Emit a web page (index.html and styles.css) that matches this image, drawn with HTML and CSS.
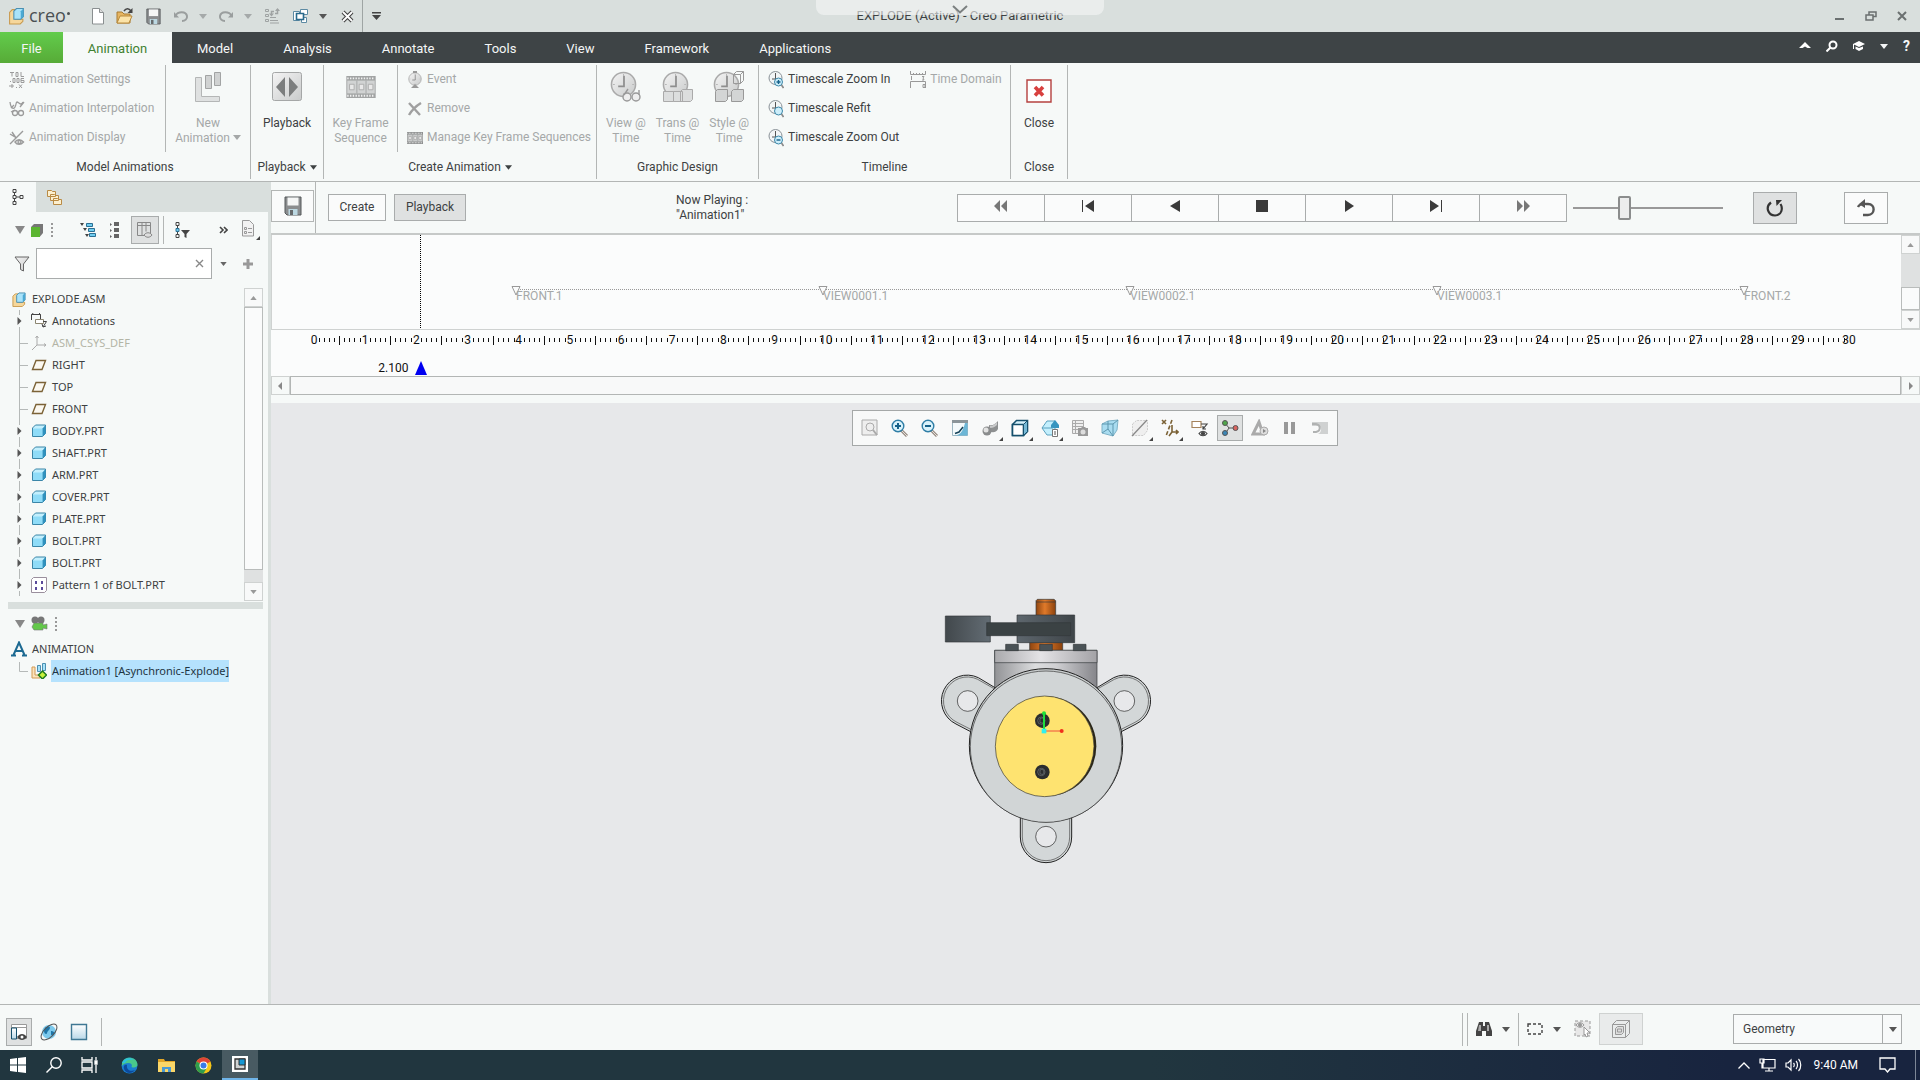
FILE: index.html
```html
<!DOCTYPE html>
<html lang="en">
<head>
<meta charset="utf-8">
<title>EXPLODE (Active) - Creo Parametric</title>
<link rel="stylesheet" href="styles.css">
</head>
<body>
<svg class="defs" aria-hidden="true">
  <defs>
    <linearGradient id="g-grey" x1="0" y1="0" x2="1" y2="1"><stop offset="0" stop-color="#f4f4f4"/><stop offset="1" stop-color="#c9cbcb"/></linearGradient>
    <linearGradient id="g-fade" x1="0" y1="0" x2="0" y2="1"><stop offset="0" stop-color="#ffffff"/><stop offset="1" stop-color="#b9d8e8"/></linearGradient>
  </defs>
  <symbol id="caret" viewBox="0 0 8 5"><path d="M0 0h8L4 5z" fill="currentColor"/></symbol>
  <symbol id="corner" viewBox="0 0 4 4"><path d="M4 0v4H0z" fill="#444"/></symbol>
  <symbol id="asm" viewBox="0 0 16 16"><path d="M1.5 4.500 4 2h3v9h7v2l-2.500 2.500h-10z" fill="#f6d79b" stroke="#c89a4e"/><path d="M5.500 3.500 8 1h6.500v7.500L12 11H5.500z" fill="#a9e3fa" stroke="#4c8fb0"/><path d="M12 11V3.500L14.500 1v7.500z" fill="#4ba9d4"/></symbol>
  <symbol id="part" viewBox="0 0 16 14"><path d="M1.500 4 4.500 1h10v8.500l-3 3h-10z" fill="#c3effd" stroke="#3b86a8"/><path d="M2 4.500h9.500V12H2z" fill="#8fdcf8"/><path d="M11.500 12.500V4.500l3-3.500v8.500z" fill="#2f92bf"/></symbol>
  <symbol id="plane" viewBox="0 0 16 12"><path d="M5 1.500h9.500L11 10.500H1.500z" fill="#fbf8f0" stroke="#7b6236" stroke-width="1.400"/></symbol>
  <symbol id="floppy" viewBox="0 0 18 20"><path d="M1 1h16v18H3l-2-2z" fill="#8b8d8f" stroke="#55585a"/><path d="M3.500 1.500h11v8h-11z" fill="#f5f6f6"/><path d="M4.500 13h9v6h-9z" fill="#bcd8e2"/><path d="M6 14h3v5H6z" fill="#666a6c"/></symbol>
  <symbol id="expander" viewBox="0 0 12 22"><path d="M3.500 0v5M3.500 17v5" stroke="#b5b9b8"/><path d="M1.500 7v8l4-4z" fill="#555"/></symbol>
  <symbol id="branch" viewBox="0 0 12 22"><path d="M3.500 0v22M3.500 11.500H12" stroke="#b5b9b8" fill="none"/></symbol>
  <symbol id="clock" viewBox="0 0 28 28"><circle cx="14" cy="14" r="12.500" fill="url(#g-grey)" stroke="#aaa" stroke-width="1.600"/><path d="M14 3v2M14 23v2M3 14h2M23 14h2" stroke="#b5b5b5"/><path d="M14.500 5v11h-6" stroke="#8e8e8e" stroke-width="1.800" fill="none"/></symbol>
  <symbol id="scale" viewBox="0 0 16 18"><circle cx="7.500" cy="7" r="6.500" fill="#f2f5f6" stroke="#8a9298"/><path d="M7.500 2v6H4" stroke="#555" fill="none"/><circle cx="10.500" cy="11" r="4" fill="#cdeefa" stroke="#3a86a8"/><path d="m13.500 14 2 3" stroke="#888" stroke-width="1.600"/></symbol>
  <symbol id="film" viewBox="0 0 32 24"><path d="M0 0h32v24H0z" fill="#8e9090"/><path d="M1 2.500h30M1 21.500h30" stroke="#f0f0f0" stroke-width="2" stroke-dasharray="1.500 1.500"/><path d="M1 5h30v14H1z" fill="#c8caca"/><path d="M11.500 5v14M21.500 5v14" stroke="#8e9090"/><path d="M3.500 9h5v6h-5zM14 9h5v6h-5zM24 9h5v6h-5z" fill="#e6e6e6" stroke="#999"/></symbol>
  <symbol id="magnify" viewBox="0 0 18 18"><path d="m10 11 6 6" stroke="#9a8f86" stroke-width="3"/><path d="m10 11 6 6" stroke="#e5e0da"/><circle cx="7" cy="7" r="5.800" fill="#d9f2fb" stroke="#2f7ea6" stroke-width="1.400"/></symbol>
</svg>

<header class="titlebar">
  <div class="brand"><svg width="17" height="18"><use href="#asm"/></svg><span>creo</span><i></i></div>
  <nav class="quick" aria-label="Quick access">
    <button class="q-new" aria-label="New"><svg width="14" height="17"><path d="M1.500.5h7l4 4v11.500h-11z" fill="#fff" stroke="#8a8f90"/><path d="M8.500.5v4h4" fill="#ddd" stroke="#8a8f90"/></svg></button>
    <button class="q-open" aria-label="Open"><svg width="18" height="18"><path d="M1 5h5l2 2h6v9H1z" fill="#e6b561" stroke="#a87a30"/><path d="M4 9h12l-3 7H1z" fill="#fbe3a8" stroke="#b98a3c"/><path d="M8 4c2-3 5-3 7 0" stroke="#444" stroke-width="1.500" fill="none"/><path d="M16.500 1v5h-5z" fill="#444"/></svg></button>
    <button class="q-save" aria-label="Save"><svg width="15" height="17"><use href="#floppy"/></svg></button>
    <button class="q-undo" aria-label="Undo"><svg width="16" height="13" fill="none" stroke="#9a9e9e" stroke-width="2"><path d="M2 6c3-5 11-5 12 0 .5 3-2 5-5 5"/><path d="M1 2v5.500h5z" fill="#9a9e9e" stroke="none"/></svg></button>
    <button class="q-caret dim" aria-label="Undo list"><svg width="8" height="5"><use href="#caret"/></svg></button>
    <button class="q-redo" aria-label="Redo"><svg width="16" height="13" fill="none" stroke="#9a9e9e" stroke-width="2"><path d="M14 6c-3-5-11-5-12 0-.5 3 2 5 5 5"/><path d="M15 2v5.500h-5z" fill="#9a9e9e" stroke="none"/></svg></button>
    <button class="q-caret dim" aria-label="Redo list"><svg width="8" height="5"><use href="#caret"/></svg></button>
    <button class="q-regen" aria-label="Regenerate"><svg width="16" height="16" fill="none" stroke="#9fa3a3"><path d="M1.500 1.500h3v2h-3zM1.500 6.500h3v2h-3zM1.500 11.500h3v2h-3zM6 12.500h8M6 15h9M6 9.500h6"/><path d="M7.500 6V3.500H10M13.500 1v4.500H11" stroke-width="1.500"/><path d="M5 5.500h5l-2.500 3zM11 3h5l-2.500-3z" fill="#9fa3a3" stroke="none"/></svg></button>
    <button class="q-win" aria-label="Windows"><svg width="17" height="16" fill="#fff" stroke="#5d8aa3"><path d="M8.500 1.500h7v5h-7zM1.500 3.500h6v9h-6zM9.500 9.500h5v5h-5z"/><path d="M4.500 5.500h7v6h-7z" stroke="#2a6a8c" stroke-width="1.600"/></svg></button>
    <button class="q-caret" aria-label="Window list"><svg width="8" height="5"><use href="#caret"/></svg></button>
    <button class="q-close" aria-label="Close window"><svg width="13" height="13"><path d="m2 2 9 9M11 2l-9 9" stroke="#444" stroke-width="4"/><path d="m2 2 9 9M11 2l-9 9" stroke="#fff" stroke-width="1.800"/></svg></button>
    <button class="q-more" aria-label="Customize"><svg width="9" height="9" fill="#444"><path d="M0 0h9v1.500H0zM0 3h9L4.500 8z"/></svg></button>
  </nav>
  <h1>EXPLODE (Active) - Creo Parametric</h1>
  <div class="drawer"><svg width="16" height="9" fill="none" stroke="#7b8080" stroke-width="2"><path d="m1 1 7 6.500L15 1"/></svg></div>
  <div class="wincontrols">
    <button aria-label="Minimize"><svg width="12" height="12"><path d="M1 8h9v2H1z" fill="#6b7070"/></svg></button>
    <button aria-label="Restore"><svg width="12" height="12" fill="none" stroke="#6b7070" stroke-width="1.500"><path d="M1 5h7v5H1zM4 4.500V2h7v4.500H8"/></svg></button>
    <button aria-label="Close"><svg width="12" height="12" stroke="#6b7070" stroke-width="2"><path d="m2 2 8 8M10 2l-8 8"/></svg></button>
  </div>
</header>

<nav class="tabs">
  <button class="file">File</button><button class="active">Animation</button><button>Model</button><button>Analysis</button><button>Annotate</button><button>Tools</button><button>View</button><button>Framework</button><button>Applications</button>
  <div class="tabtools">
    <button aria-label="Collapse ribbon"><svg width="12" height="10" fill="#fff"><path d="M0 7 6 1l6 6H8.500L6 5.500 3.500 7z"/></svg></button>
    <button aria-label="Search"><svg width="12" height="12" fill="none" stroke="#fff" stroke-width="2"><circle cx="7" cy="5" r="3.500"/><path d="m4.500 7.500-4 4"/></svg></button>
    <button aria-label="Learning"><svg width="12" height="12" fill="#fff"><path d="m6 1 6 3-6 3-6-3zM2.500 6.500 6 8l4-1.500V9L6 11 2.500 9zM0 4h1v5H0z"/></svg></button>
    <button aria-label="Learning list"><svg width="8" height="5"><use href="#caret"/></svg></button>
    <button aria-label="Help" class="help">?</button>
  </div>
</nav>

<section class="ribbon">
  <div class="group g-model">
    <div class="body">
      <div class="rows sep">
        <button disabled><svg width="16" height="18" fill="none" stroke="#9b9b9b"><path d="M1 1.500h4M3 1.500v4M7 1.500h2v4H7zM12 1v4.500h3M1.500 10v1M4 7.500h2v4H4zM8 7.500h2v4H8zM15 7.500h-3v4h3v-2h-3M0 15h5M3 13v4M7 16.500h1M10 13.500l3 3.500M13 13.500 10 17"/></svg>Animation Settings</button>
        <button disabled><svg width="16" height="17" fill="none" stroke="#9b9b9b" stroke-width="1.300"><path d="M1 2c1 8 5 8 6 2s4 4 7-2M11 7l4-5M2 8l3-3M2 12l4-2"/><circle cx="6" cy="13" r="2.500"/><circle cx="12" cy="13" r="2.500"/></svg>Animation Interpolation</button>
        <button disabled><svg width="16" height="16" fill="none" stroke="#9b9b9b" stroke-width="1.400"><path d="M1 14 14 1M3 2l4 6M1 4l5 3"/><path d="M6 12c2-3 6-3 8.500 0-2.500 3-6.500 3-8.500 0z"/><circle cx="10.500" cy="12" r="1.500"/></svg>Animation Display</button>
      </div>
      <button class="big" disabled><svg width="28" height="32" fill="#dfe1e1" stroke="#b4b6b6"><path d="M1.500 6.500h6v19h18v5h-24z"/><path d="M11.500 4.500h6v13h-6zM20.500 1.500h6v13h-6z" fill="#d0d2d2" stroke="#a2a4a4"/></svg><span>New<br>Animation <svg width="8" height="5"><use href="#caret"/></svg></span></button>
    </div>
    <div class="caption">Model Animations</div>
  </div>
  <div class="group g-play">
    <div class="body">
      <button class="big"><svg width="30" height="32"><rect x=".5" y="1.500" width="29" height="28" rx="2" fill="url(#g-grey)" stroke="#a5a7a7"/><path d="M13 6v20L4 16zM17 6v20l9-10z" fill="#7c7e7e"/></svg><span>Playback</span></button>
    </div>
    <div class="caption">Playback <svg width="7" height="5"><use href="#caret"/></svg></div>
  </div>
  <div class="group g-create">
    <div class="body">
      <button class="big sep" disabled><svg width="32" height="32"><g transform="translate(0 5)" opacity=".8"><use href="#film" width="32" height="22"/></g></svg><span>Key Frame<br>Sequence</span></button>
      <div class="rows">
        <button disabled><svg width="16" height="18"><use href="#clock" x="1" y="1" width="14" height="14"/><path d="M4 17h8l-4-4zM6 0h4v2H6z" fill="#999"/></svg>Event</button>
        <button disabled><svg width="16" height="14" stroke="#a0a0a0" stroke-width="2.400" fill="none"><path d="m2 1 11 12M14 1C9 4 5 8 2 13"/></svg>Remove</button>
        <button disabled><svg width="16" height="12"><use href="#film" width="16" height="12"/></svg>Manage Key Frame Sequences</button>
      </div>
    </div>
    <div class="caption">Create Animation <svg width="7" height="5"><use href="#caret"/></svg></div>
  </div>
  <div class="group g-design">
    <div class="body">
      <button class="big" disabled><svg width="32" height="32"><use href="#clock" width="27" height="27"/><g fill="#eee" stroke="#999" stroke-width="1.400"><circle cx="17" cy="26" r="4"/><circle cx="26" cy="26" r="4"/><path d="M14 24l4-6M29 24V19" fill="none"/></g></svg><span>View @<br>Time</span></button>
      <button class="big" disabled><svg width="32" height="32"><use href="#clock" width="27" height="27"/><g fill="#dcdede" stroke="#aaa"><path d="M1.500 20.500h10v10h-10zM11.500 20.500h9v10h-9zM18.500 20.500l2-2h10v10l-2 2h-10z"/></g></svg><span>Trans @<br>Time</span></button>
      <button class="big" disabled><svg width="32" height="32"><use href="#clock" width="27" height="27"/><g fill="#d3d5d5" stroke="#999"><path d="M20.500 3.500l3-3h7v9l-3 3h-7zM20.500 3.500h7v9M27.500 3.500l3-3" fill="none"/><path d="M2.500 20.500l2-2h10v10l-2 2h-10zM18.500 20.500l2-2h10v10l-2 2h-10z"/></g></svg><span>Style @<br>Time</span></button>
    </div>
    <div class="caption">Graphic Design</div>
  </div>
  <div class="group g-timeline">
    <div class="body">
      <div class="rows">
        <button><svg width="16" height="18"><use href="#scale"/><path d="M8.500 11h4M10.500 9v4" stroke="#15618a" stroke-width="1.400"/></svg>Timescale Zoom In</button>
        <button><svg width="16" height="18"><use href="#scale"/></svg>Timescale Refit</button>
        <button><svg width="16" height="18"><use href="#scale"/><path d="M8.500 11h4" stroke="#15618a" stroke-width="1.400"/></svg>Timescale Zoom Out</button>
      </div>
      <div class="rows">
        <button disabled><svg width="16" height="18" fill="none" stroke="#999"><path d="M.5 0v3.500h15V0M3.500 2v1M6.500 2v1M9.500 2v1M12.500 2v1M.5 17v-6.500h15V17M1.500 5v4M12 5.500h2l-1 1.500 1 2h-2M13 13.500h2v3h-2z"/></svg>Time Domain</button>
      </div>
    </div>
    <div class="caption">Timeline</div>
  </div>
  <div class="group g-close">
    <div class="body">
      <button class="big"><svg width="26" height="32"><path d="M1 9h24v22H1z" fill="#fff" stroke="#b5413f" stroke-width="1.400"/><path d="m9 16 8 8.500M17 16l-8 8.500" stroke="#d8403f" stroke-width="3.600"/></svg><span>Close</span></button>
    </div>
    <div class="caption">Close</div>
  </div>
</section>

<main class="work">
  <aside class="side">
    <div class="sidetabs">
      <button class="on" aria-label="Model tree"><svg width="12" height="16" fill="none" stroke="#444"><path d="M1 .5h3v3H1zM1 6.500h3v3H1zM1 12.500h3v3H1zM8 6.500h3v3H8zM2.500 4v2M2.500 10v2M4 8h4"/></svg></button>
      <button aria-label="Folders"><svg width="17" height="17" fill="#fdf0cf" stroke="#b98b45"><path d="M1.500 1.500h4l1 1h3v5h-8zM4.500 5.500h4l1 1h3v5h-8zM7.500 9.500h4l1 1h3v5h-8z"/></svg></button>
    </div>
    <div class="treebar">
      <button aria-label="Collapse"><svg width="10" height="8" fill="#888"><path d="M0 0h10L5 8z"/></svg></button>
      <button class="t-cube" aria-label="Model"><svg width="14" height="15"><path d="m1 4 3-3h9v9l-3 3.500H1z" fill="#777"/><path d="M1 4h9v10H1z" fill="#5bb531"/></svg></button>
      <span class="grip"></span>
      <button class="t-a" aria-label="Tree columns"><svg width="17" height="16" fill="#6fcdf0" stroke="#2b6f93"><path d="M6.500 1.500h6v3h-6zM8.500 6.500h6v3h-6zM9.500 11.500h6v3h-6z"/><path d="M0 1h4L2 4zM3 6h4L5 9zM5 12h4l-2 3z" fill="#444" stroke="none"/></svg></button>
      <button class="t-b" aria-label="Tree list"><svg width="10" height="16" fill="#666"><path d="M4 0h5v4H4zM4 6h5v4H4zM4 12h5v4H4zM0 1l2 1.500L0 4zM0 7l2 1.500L0 10zM0 13l2 1.500L0 16z"/></svg></button>
      <button class="t-c pressed" aria-label="Show columns"><svg width="16" height="17" fill="none" stroke="#888"><path d="M.5.5h13v13H.5zM.5 3.500h13M5 .5v13M9 .5v9"/><path d="M7 13c2-3 6-3 8 0-2 3-6 3-8 0z" fill="#ddd"/></svg></button>
      <span class="rule"></span>
      <button class="t-d" aria-label="Tree filters"><svg width="16" height="17" fill="none" stroke="#444"><path d="M1 .5h3v3H1zM1 12.500h3v3H1zM2.500 4v8"/><path d="M1 6.500h3v3H1z" fill="#6fcdf0" stroke="#2b6f93"/><path d="M6 8h9l-3.500 4v4l-2-1v-3z" fill="#444" stroke="none"/></svg></button>
      <button class="t-e" aria-label="More"><svg width="9" height="8" fill="none" stroke="#444" stroke-width="1.600"><path d="m1 1 3 3-3 3M5 1l3 3-3 3"/></svg></button>
      <button class="t-f" aria-label="Settings"><svg width="19" height="20"><path d="M1.500.5h7l4 4v11.500h-11z" fill="#f2f2f2" stroke="#999"/><path d="M3.500 7.500h2v2h-2zM3.500 11.500h2v2h-2zM7 8.500h4M7 12.500h4" fill="none" stroke="#999"/><use href="#corner" x="15" y="16" width="4" height="4"/></svg></button>
    </div>
    <div class="search">
      <svg width="16" height="16"><path d="M1 1h14L9.500 8v7l-3-1.500V8z" fill="url(#g-grey)" stroke="#666"/></svg>
      <div class="field"><input type="text" aria-label="Filter tree"><button aria-label="Clear"><svg width="9" height="9" stroke="#888" stroke-width="1.400"><path d="m1 1 7 7M8 1 1 8"/></svg></button></div>
      <button class="s-caret" aria-label="Filter list"><svg width="7" height="4"><use href="#caret"/></svg></button>
      <button class="s-plus" aria-label="Add"><svg width="12" height="12" stroke="#999" stroke-width="3"><path d="M6 1v10M1 6h10"/></svg></button>
    </div>
    <div class="treewrap">
      <ul class="tree">
        <li class="root"><svg width="16" height="15"><use href="#asm"/></svg>EXPLODE.ASM</li>
        <li><svg width="12" height="22"><use href="#expander"/></svg><svg width="16" height="16" fill="none" stroke="#444"><path d="M.5 7V1.500h9V7M.5 1.500l2-1.500M9.500 1.500 8 0"/><path d="M4.500 6.500h8v4h-8z" fill="#fff" stroke="#8c8671"/><path d="M12 8.500h3.500L12 14l-1-3M12 14l3-1"/></svg>Annotations</li>
        <li class="faded"><svg width="12" height="22"><use href="#branch"/></svg><svg width="16" height="16" fill="none" stroke="#aaa"><path d="M6 1v9h9M6 10l-5 5M4.500 3 6 1l1.500 2M13 8.500l2 1.500-2 1.500"/></svg>ASM_CSYS_DEF</li>
        <li><svg width="12" height="22"><use href="#branch"/></svg><svg width="16" height="12"><use href="#plane"/></svg>RIGHT</li>
        <li><svg width="12" height="22"><use href="#branch"/></svg><svg width="16" height="12"><use href="#plane"/></svg>TOP</li>
        <li><svg width="12" height="22"><use href="#branch"/></svg><svg width="16" height="12"><use href="#plane"/></svg>FRONT</li>
        <li><svg width="12" height="22"><use href="#expander"/></svg><svg width="16" height="14"><use href="#part"/></svg>BODY.PRT</li>
        <li><svg width="12" height="22"><use href="#expander"/></svg><svg width="16" height="14"><use href="#part"/></svg>SHAFT.PRT</li>
        <li><svg width="12" height="22"><use href="#expander"/></svg><svg width="16" height="14"><use href="#part"/></svg>ARM.PRT</li>
        <li><svg width="12" height="22"><use href="#expander"/></svg><svg width="16" height="14"><use href="#part"/></svg>COVER.PRT</li>
        <li><svg width="12" height="22"><use href="#expander"/></svg><svg width="16" height="14"><use href="#part"/></svg>PLATE.PRT</li>
        <li><svg width="12" height="22"><use href="#expander"/></svg><svg width="16" height="14"><use href="#part"/></svg>BOLT.PRT</li>
        <li><svg width="12" height="22"><use href="#expander"/></svg><svg width="16" height="14"><use href="#part"/></svg>BOLT.PRT</li>
        <li><svg width="12" height="22"><use href="#expander"/></svg><svg width="16" height="16"><path d="M.5 2.500l2-2h13v13l-2 2H.5z" fill="#fff" stroke="#9a8f9d"/><path d="M4 4h2v3H4zM10 4h2v3h-2zM4 10h2v3H4zM10 10h2v3h-2z" fill="#5a4a9a"/></svg>Pattern 1 of BOLT.PRT</li>
      </ul>
      <div class="vscroll">
        <button aria-label="Scroll up"><svg class="up" width="7" height="4"><use href="#caret"/></svg></button>
        <div class="thumb"></div><div class="gap"></div>
        <button aria-label="Scroll down"><svg width="7" height="4"><use href="#caret"/></svg></button>
      </div>
    </div>
    <div class="splitter"></div>
    <div class="animbar">
      <button aria-label="Collapse"><svg width="10" height="8" fill="#888"><path d="M0 0h10L5 8z"/></svg></button>
      <svg width="17" height="16"><circle cx="4" cy="4" r="3.500" fill="#777"/><circle cx="10" cy="4" r="3.500" fill="#777"/><path d="M3 7h9v2l4-1v5l-4-1v2H3l-2-3z" fill="#63c84a" stroke="#777" stroke-width=".6"/></svg>
      <span class="grip"></span>
    </div>
    <ul class="tree">
      <li class="root"><svg width="16" height="16" fill="none" stroke="#1d6a92" stroke-width="2"><path d="M2.500 14 8 1.500 13.500 14M4.500 10h7M0 14.500h5M11 14.500h5"/></svg>ANIMATION</li>
      <li><svg width="12" height="22" fill="none" stroke="#b5b9b8"><path d="M3.500 2v9.500H12"/></svg><svg width="16" height="16"><path d="M1 4h3v8h5v3H1z" fill="#fbe3bd" stroke="#d39a52"/><path d="M6.500 2.500h3v6h-3zM11.500.5h3v7h-3z" fill="#a9e3fa" stroke="#4c8fb0"/><path d="m11.500 8 4 4-4 4-4-4z" fill="#c8f03c" stroke="#1d7a1d" stroke-width="1.500"/></svg><span class="picked">Animation1 [Asynchronic-Explode]</span></li>
    </ul>
  </aside>

  <section class="stage">
    <div class="player">
      <div class="savecell"><button aria-label="Save playback"><svg width="18" height="20"><use href="#floppy"/></svg></button></div>
      <div class="modes"><button>Create</button><button class="pressed">Playback</button></div>
      <p class="now">Now Playing :<br>"Animation1"</p>
      <div class="transport">
        <button class="soft" aria-label="Rewind"><svg width="14" height="12"><path d="M6 0v12L0 6zM13 0v12L7 6z"/></svg></button>
        <button aria-label="To start"><svg width="14" height="12"><path d="M1 0h1v12H1zM13 0v12L4 6z"/></svg></button>
        <button aria-label="Play backward"><svg width="14" height="12"><path d="M12 0v12L2 6z"/></svg></button>
        <button aria-label="Stop"><svg width="14" height="12"><path d="M1 0h12v12H1z"/></svg></button>
        <button aria-label="Play"><svg width="14" height="12"><path d="M3 0v12l9-6z"/></svg></button>
        <button aria-label="To end"><svg width="14" height="12"><path d="M12 0h1v12h-1zM1 0v12l9-6z"/></svg></button>
        <button class="soft" aria-label="Forward"><svg width="14" height="12"><path d="M1 0v12l6-6zM8 0v12l6-6z"/></svg></button>
      </div>
      <input class="speed" type="range" min="0" max="100" value="33" aria-label="Playback speed">
      <button class="loop pressed" aria-label="Loop"><svg width="18" height="18" fill="none" stroke="#333" stroke-width="2.200"><path d="M5 3.500C-1 8 2 16.500 9 16.500S17 9 14.500 5"/><path d="M10 1h6l-5.500 6z" fill="#333" stroke="none"/></svg></button>
      <button class="back" aria-label="Reverse at end"><svg width="20" height="18" fill="none" stroke="#555" stroke-width="2.400"><path d="M2 8C4 4 8 5 12 5c8 0 7 11 0 11H7"/><path d="M9 0v9L3 5z" fill="#555" stroke="none"/></svg></button>
    </div>
    <div class="tracks">
      <div class="lane" id="lane">
        <div class="wire"></div>
        <div class="cursor"></div>
      </div>
      <div class="vscroll">
        <button aria-label="Scroll up"><svg class="up" width="7" height="4"><use href="#caret"/></svg></button>
        <div class="gap"></div><div class="thumb"></div>
        <button aria-label="Scroll down"><svg width="7" height="4"><use href="#caret"/></svg></button>
      </div>
    </div>
    <div class="rulerbox">
      <div class="ruler" id="ruler"></div>
      <div class="pointer"><span>2.100</span><svg width="12" height="14" fill="#0000f0"><path d="M6 0l6 14H0z"/></svg></div>
    </div>
    <div class="hscroll">
      <button aria-label="Scroll left"><svg width="5" height="8" fill="#888"><path d="M4 0v8L0 4z"/></svg></button>
      <div class="thumb"></div>
      <button aria-label="Scroll right"><svg width="5" height="8" fill="#888"><path d="M1 0v8l4-4z"/></svg></button>
    </div>
    <div class="viewport">
      <div class="viewbar">
        <button aria-label="Refit"><svg width="18" height="18"><path d="M1 1h15v15H1z" fill="#eee" stroke="#aaa"/><circle cx="9" cy="8" r="4" fill="none" stroke="#aaa"/><path d="m12 11 4 5" stroke="#aaa" stroke-width="2"/></svg></button>
        <button aria-label="Zoom in"><svg width="18" height="18"><use href="#magnify"/><path d="M4 7h6M7 4v6" stroke="#15618a" stroke-width="2"/></svg></button>
        <button aria-label="Zoom out"><svg width="18" height="18"><use href="#magnify"/><path d="M4 7h6" stroke="#15618a" stroke-width="2"/></svg></button>
        <button aria-label="Repaint"><svg width="18" height="18"><path d="M1.500 1.500h15v15h-15z" fill="#f4fafc" stroke="#9db7c3"/><path d="M1 1h16v3H1z" fill="#8b959a"/><path d="M3 16.500c7 0 9-5 11-12.500h2.500v12.500z" fill="#6cb6d6"/><path d="m4 14.500 4-1.500 4-5" stroke="#17445a" stroke-width="1.500" fill="none"/></svg></button>
        <button aria-label="Rendering"><svg width="18" height="18"><path d="M8 6c4 1 6-1 9-4v8c-2 4-6 4-9 2z" fill="#8e9091"/><path d="M9 7c3 0 5-2 7-4v3c-2 2-4 3-7 3z" fill="#c8c9ca"/><circle cx="6" cy="12" r="4.500" fill="#8a8c8d"/><circle cx="5" cy="11" r="2.500" fill="#e2e2e2"/></svg><svg class="corner"><use href="#corner"/></svg></button>
        <button aria-label="Display style"><svg width="18" height="18"><path d="M1.500 5.500l4-4h11v11l-4 4h-11z" fill="#d5f1fb" stroke="#16506d" stroke-width="1.600"/><path d="M1.500 5.500h11v11h-11z" fill="#fff" stroke="#16506d" stroke-width="1.600"/><path d="m12.500 5.500 4-4v11l-4 4z" fill="#76b9d6" stroke="#16506d"/></svg><svg class="corner"><use href="#corner"/></svg></button>
        <button aria-label="Saved orientations"><svg width="18" height="18"><path d="m1 9 5-7h8v14H6z" fill="#c3effd" stroke="#5aa1bf"/><path d="M10 9V6l4-5 4 5v3z" fill="#3795bf"/><path d="M1 9h11" stroke="#5aa1bf"/><path d="M11.500 10.500h5v7h-5z" fill="#fff" stroke="#777"/><path d="M13 13h2M13 15h2" stroke="#555"/></svg><svg class="corner"><use href="#corner"/></svg></button>
        <button aria-label="View manager"><svg width="18" height="18"><path d="M1.500 1.500h11v13h-11zM1.500 4.500h11M1.500 7.500h11M1.500 10.500h11M4.500 2v12" fill="#eee" stroke="#aaa"/><path d="M7 9h3l1-1h3l1 1h2v8H7z" fill="#999"/><circle cx="12" cy="13" r="2.500" fill="#ddd"/></svg></button>
        <button aria-label="Perspective"><svg width="18" height="18"><path d="m1 5 6-3 10-1-1 10-4 6L1 14z" fill="#a9dcf0" stroke="#7fb2c7"/><path d="M1 5l11 0 5-4M12 5v12M7 2v8l-6 4M7 10l5 7" fill="none" stroke="#5d97af"/></svg></button>
        <button aria-label="Section"><svg width="18" height="18"><path d="M1.500 5l4-3.500h11v10l-4 5h-11z" fill="#efefef" stroke="#ccc" stroke-dasharray="2 1"/><path d="m1 17 15-16" stroke="#888" stroke-width="1.300"/></svg><svg class="corner"><use href="#corner"/></svg></button>
        <button aria-label="Datum display"><svg width="18" height="18" fill="none" stroke="#7b6236" stroke-width="1.600"><path d="m1 1 4 4M5 1 1 5"/><path d="M11 1 5 17" stroke-dasharray="4 2"/><path d="M11 6v7h6M11 13l-3 4M15 11l2 2-2 2"/></svg><svg class="corner"><use href="#corner"/></svg></button>
        <button aria-label="Annotation display"><svg width="18" height="18" fill="none" stroke="#444" stroke-width="1.200"><path d="M1 2.500h9v6H1z" fill="#fff" stroke="#a5835c"/><path d="M10 5h6l-4 5M12 7v3h3M8 14.500c2-3 6-3 8 0-2 3-6 3-8 0z"/><circle cx="12" cy="14.500" r="1.500" fill="#444"/></svg></button>
        <button class="pressed" aria-label="Spin center"><svg width="18" height="18" stroke="#555"><path d="m4 4 4 5-4 6M8 9h7" fill="none"/><circle cx="4" cy="4" r="2.500" fill="#4fa64a"/><circle cx="4" cy="14" r="2.500" fill="#3b86b5"/><circle cx="14.500" cy="9" r="2.500" fill="#d8645f"/></svg></button>
        <button aria-label="Simulate"><svg width="18" height="18"><path d="M8 3 2 15h10z" fill="none" stroke="#aaa" stroke-width="3"/><circle cx="13" cy="12" r="4" fill="#ddd" stroke="#aaa"/><path d="m12 10 3 2-3 2z" fill="#888"/></svg></button>
        <button aria-label="Pause"><svg width="18" height="18" fill="#999"><path d="M3 3h4v12H3zM10 3h4v12h-4z"/></svg></button>
        <button aria-label="Resume"><svg width="18" height="18"><path d="M1 3h16v12H7c4-2 4-6 1-8H1z" fill="#cfd1d1"/><path d="M1 5h4c5 1 5 7 0 8H2" fill="none" stroke="#b0b2b2" stroke-width="2"/></svg></button>
      </div>
      <svg class="model" viewBox="0 0 780 900" role="img" aria-label="Exploded assembly">
        <defs>
          <linearGradient id="m-steel"><stop offset="0" stop-color="#929396"/><stop offset=".4" stop-color="#dcdddf"/><stop offset=".6" stop-color="#d0d0d3"/><stop offset="1" stop-color="#85858a"/></linearGradient>
          <linearGradient id="m-top"><stop offset="0" stop-color="#aaaaad"/><stop offset=".45" stop-color="#e4e3e6"/><stop offset="1" stop-color="#a3a2a6"/></linearGradient>
          <linearGradient id="m-dark"><stop offset="0" stop-color="#42484c"/><stop offset=".4" stop-color="#68727a"/><stop offset="1" stop-color="#3f4549"/></linearGradient>
          <linearGradient id="m-orange"><stop offset="0" stop-color="#8f4510"/><stop offset=".45" stop-color="#e07a2a"/><stop offset="1" stop-color="#8a410d"/></linearGradient>
        </defs>
        <g stroke="#33383a" stroke-width="2">
          <path d="M329 187h99v26h-99z" fill="url(#m-orange)"/>
          <path d="M224 211h307v140H224z" fill="url(#m-steel)"/>
          <path d="M224 211h307v37H224z" fill="url(#m-top)"/>
          <path d="M257 193h38v19h-38zM359 193h38v19h-38zM460 193h38v19h-38z" fill="#4a5256"/>
          <path d="m348 62 4-4h50l5 4v50h-59z" fill="url(#m-orange)"/>
          <path d="M348 66h59"/>
          <path d="M291 105h173v83H291zM76 108h135v78H76z" fill="url(#m-dark)"/>
          <path d="M200 128h252v39H200z" fill="#3b4244"/>
        </g>
        <g fill="#d3d7d8" stroke="#222" stroke-width="3">
          <path d="M240 332 175 293A77 77 0 1 0 108 432L200 480z"/>
          <path d="M516 332 581 293A77 77 0 1 1 648 432L556 480z"/>
          <path d="M301 690v81a77 77 0 0 0 154 0v-81z"/>
        </g>
        <g fill="none" stroke="#444" stroke-width="2">
          <path d="M236 334 173 298A71 71 0 1 0 111 427L160 452"/>
          <path d="M520 334 583 298A71 71 0 1 1 645 427L596 452"/>
          <path d="M307 715v56a71 71 0 0 0 142 0v-56"/>
        </g>
        <g fill="#e7e8ea" stroke="#222" stroke-width="2">
          <circle cx="143" cy="363" r="31"/><circle cx="613" cy="363" r="31"/><circle cx="378" cy="770" r="31"/>
        </g>
        <circle cx="378" cy="496" r="230" fill="#c8cccd" stroke="#222" stroke-width="3"/>
        <circle cx="378" cy="500" r="227" fill="#d1d5d6" stroke="#333" stroke-width="2"/>
        <circle cx="379" cy="499" r="150" fill="#2a2618"/>
        <ellipse cx="374" cy="499" rx="148" ry="151" fill="#fee370" stroke="#333" stroke-width="2"/>
        <g fill="#2b2d2f"><circle cx="367" cy="422" r="22"/><circle cx="367" cy="576" r="22"/></g>
        <g fill="none" stroke="#70767a" stroke-width="2"><circle cx="364" cy="422" r="11"/><circle cx="364" cy="576" r="11"/><path d="m360 570 8-3 4 9-4 8-8-3zM360 416l8-3 4 9-4 8-8-3z"/></g>
        <path d="M372 400v53" stroke="#1fdf3c" stroke-width="6"/><circle cx="372" cy="400" r="6" fill="#1fdf3c"/>
        <path d="M372 453h53" stroke="#f0503c" stroke-width="3"/><circle cx="425" cy="453" r="6" fill="#f0301c"/>
        <path d="M365 446h14v14h-14z" fill="#2ff0f0"/>
      </svg>
    </div>
  </section>
</main>

<footer class="status">
  <button class="pressed" aria-label="Navigator"><svg width="18" height="18"><path d="M1.500 1.500h15v14h-15z" fill="#fff" stroke="#999"/><path d="M1.500 4.500h15" stroke="#999"/><path d="M1.500 5h5v11h-5z" fill="url(#g-fade)" stroke="#16506d"/><path d="M7 14c3-4 7-4 10 0-3 4-7 4-10 0z" fill="#444"/><circle cx="12" cy="14" r="1.500" fill="#fff"/></svg></button>
  <button aria-label="Browser"><svg width="18" height="18"><circle cx="9" cy="9" r="7" fill="#7cc9ec"/><path d="M5 5c2-2 5-2 5 0s-3 3-3 5-3 1-3-2zM11 8c2 0 4 1 3 3s-3 2-3 0z" fill="#1f76a8"/><ellipse cx="9" cy="9" rx="10" ry="5" transform="rotate(-45 9 9)" fill="none" stroke="#555"/></svg></button>
  <button aria-label="Full screen"><svg width="18" height="18"><path d="M1.500 1.500h15v15h-15z" fill="url(#g-fade)" stroke="#3f7894" stroke-width="1.400"/></svg></button>
  <span class="bar short"></span>
  <div class="pick">
    <span class="bar"></span><span class="bar second"></span>
    <button class="p-find" aria-label="Find"><svg width="18" height="18"><path d="M4 2h4v4h2V2h4l3 9v5h-6v-5H7v5H1v-5z" fill="#444"/><path d="M4 5h2v6H3zM12 5h2v6h-2z" fill="#aaa"/></svg></button>
    <button class="p-c1" aria-label="Find list"><svg width="8" height="5"><use href="#caret"/></svg></button>
    <span class="bar"></span>
    <button class="p-box" aria-label="Box select"><svg width="16" height="12"><path d="M1 1h14v10H1z" fill="none" stroke="#444" stroke-width="1.400" stroke-dasharray="3 2"/></svg></button>
    <button class="p-c2" aria-label="Select list"><svg width="8" height="5"><use href="#caret"/></svg></button>
    <button class="p-area" aria-label="Select visible"><svg width="18" height="18" fill="none" stroke="#999"><path d="M1 1h15v15H1z" fill="#e8e8e8" stroke-dasharray="3 2"/><path d="M2 5c2-3 6-3 8 0-2 3-6 3-8 0z"/><circle cx="6" cy="5" r="1.500" fill="#999"/><path d="m10 7 6 6h-3l1 3-2 1-1-3-1 1z" fill="#fff"/></svg></button>
    <button class="p-solid" disabled aria-label="Inside select"><svg width="20" height="20" fill="none" stroke="#999"><path d="m1.500 5.500 4-4h13v13l-4 4h-13zM1.500 5.500h13v13M14.500 5.500l4-4"/><path d="M4.500 9.500l2-2h6v6l-2 2h-6zM6.500 10h4v3h-4z" fill="#ddd"/></svg></button>
    <label class="filter"><select aria-label="Selection filter"><option>Geometry</option></select><span><svg width="8" height="5"><use href="#caret"/></svg></span></label>
  </div>
</footer>

<footer class="taskbar">
  <button class="sys" aria-label="Start"><svg width="16" height="16" fill="#fff"><path d="m0 2 7-1v6.500H0zM8 1l8-1v7.500H8zM0 8.500h7V15l-7-1zM8 8.500h8V16l-8-1z"/></svg></button>
  <button class="sys" aria-label="Search"><svg width="16" height="16" fill="none" stroke="#fff" stroke-width="1.400"><circle cx="10" cy="6" r="5.200"/><path d="M6.500 9.500.5 15.500"/></svg></button>
  <button class="sys" aria-label="Task view"><svg width="18" height="16" fill="none" stroke="#fff" stroke-width="1.300"><path d="M1 0v3h10V0M1 5h10v6H1zM1 16v-3h10v3M15 0v3M15 8v8"/><path d="M14 4h2v3h-2z" fill="#fff"/></svg></button>
  <div class="apps">
    <button aria-label="Edge"><svg width="17" height="17"><circle cx="8.500" cy="8.500" r="8" fill="#1b7fd0"/><path d="M1 6C3-1 15-1 16.500 7c0 4-4 4-6 3 1-2 0-4-3-4S2 7 1 9z" fill="#49c98c"/><path d="M1 6c2-5 8-6 12-3-5-1-8 0-9 3z" fill="#2bc2df"/><path d="M6 8c-1 5 4 7 8 5-3 4-9 4-11-1-1-3 1-5 3-4z" fill="#0d4a9c"/></svg></button>
    <button aria-label="Files"><svg width="17" height="15"><path d="M0 1h6l1 2h10v11H0z" fill="#e2a628"/><path d="M0 4h17v10H0z" fill="#fbd768"/><path d="M4 14V9h9v5h-3v-3H7v3z" fill="#4a9ad4"/></svg></button>
    <button aria-label="Chrome"><svg width="17" height="17"><circle cx="8.500" cy="8.500" r="8" fill="#f5c518"/><path d="M8.500 8.500 1.600 4.500A8 8 0 0 1 15.500 4.500z" fill="#df4537"/><path d="M8.500 8.500 1.600 4.500A8 8 0 0 0 8.500 16.500l3-5z" fill="#2f9e4e"/><circle cx="8.500" cy="8.500" r="4" fill="#fff"/><circle cx="8.500" cy="8.500" r="3" fill="#3a7ae8"/></svg></button>
    <button class="running" aria-label="Creo"><svg width="16" height="16"><path d="M0 0h16v16H0z" fill="#fff"/><path d="M3 3h10v10H3z" fill="#cfd3d4" stroke="#333" stroke-width="1.300"/><path d="M7 3h6v6H7z" fill="#1597d3" stroke="#333"/></svg></button>
  </div>
  <div class="tray">
    <button aria-label="Hidden icons"><svg width="12" height="7" fill="none" stroke="#fff" stroke-width="1.300"><path d="m.5 6.500 5.500-5.500 5.500 5.500"/></svg></button>
    <svg width="17" height="14" fill="none" stroke="#fff" stroke-width="1.200"><path d="M4 1.500h12v8.500H4zM6 13h8M10 10v3M1 1h4v4H1zM3 5v5h2"/></svg>
    <svg width="17" height="14" fill="none" stroke="#fff" stroke-width="1.200"><path d="M1 5v4h2l3 3V2L3 5zM8.500 5c1 1 1 3 0 4M11 3c2 2 2 6 0 8M13.500 1c3 3 3 9 0 12"/></svg>
    <time>9:40 AM</time>
    <button class="notes" aria-label="Notifications"><svg width="17" height="16" fill="none" stroke="#fff" stroke-width="1.300"><path d="M1 1h15v11h-5l-2.500 3L6 12H1z"/></svg></button>
    <span class="edge"></span>
  </div>
</footer>
<script src="script.js"></script>
</body>
</html>
```
FILE: styles.css
```css
* { box-sizing: border-box; }
body {
  margin: 0;
  min-height: 100vh;
  display: flex;
  flex-direction: column;
  background: #f6f9f8;
  color: #3d4142;
  font: 12px/15px Roboto, "Noto Sans", sans-serif;
}
.defs { position: absolute; width: 0; height: 0; }
svg { display: block; flex: none; }
button {
  display: flex;
  align-items: center;
  justify-content: center;
  margin: 0;
  padding: 0;
  border: 0;
  background: none;
  color: inherit;
  font: inherit;
  white-space: nowrap;
}
button:disabled { color: #a5a8a8; }
ul { margin: 0; padding: 0; list-style: none; }
.pressed { background: #dfe1e1; border: 1px solid #a9acac; }

/* Title bar */
.titlebar {
  position: relative;
  display: flex;
  justify-content: space-between;
  height: 32px;
  background: #d9dfdd;
}
.brand { display: flex; align-items: center; width: 85px; padding-left: 8px; }
.brand span { margin: -2px 0 0 4px; font: 18px/24px "Open Sans", sans-serif; color: #4b5052; }
.brand i { width: 3px; height: 3px; margin: -5px 0 0 1px; border-radius: 50%; background: #4b5052; }
.quick { display: flex; align-items: center; margin-right: auto; color: #555; }
.quick button { height: 32px; }
.q-new { width: 26px; }
.q-open { width: 28px; }
.q-save { width: 28px; }
.q-undo, .q-redo { width: 27px; }
.q-caret { width: 18px; }
.dim { color: #a5a9a9; }
.q-regen { width: 29px; }
.q-win { width: 28px; }
.q-close { width: 30px; }
.quick .q-more { width: 28px; border-left: 1px solid #9fa5a4; }
.titlebar h1 {
  position: absolute;
  left: 50%;
  top: 8px;
  margin: 0;
  transform: translateX(-50%);
  font: inherit;
  font-size: 13px;
  line-height: 16px;
  white-space: nowrap;
}
.drawer {
  position: absolute;
  left: 50%;
  top: 0;
  display: flex;
  justify-content: center;
  align-items: center;
  width: 288px;
  height: 15px;
  padding-top: 3px;
  transform: translateX(-50%);
  border-radius: 0 0 8px 8px;
  background: rgba(245, 247, 246, .6);
}
.wincontrols { display: flex; gap: 19px; padding-right: 12px; }

/* Ribbon tabs */
.tabs { display: flex; height: 31px; background: #3e4446; color: #f4f6f6; font-size: 13px; }
.tabs > button { padding: 2px 25px 0; }
.tabs > .file { width: 63px; background: linear-gradient(#62cc4c, #57ab37); }
.tabs > .active { width: 109px; background: #f6f9f8; color: #3f8130; }
.tabtools { display: flex; align-items: center; gap: 15px; margin-left: auto; padding: 0 10px 3px 0; }
.help { font-weight: 700; font-size: 14px; }

/* Ribbon groups */
.ribbon { display: flex; padding: 2px 0; border-bottom: 1px solid #b3b6b5; }
.group { display: flex; flex-direction: column; height: 114px; border-right: 1px solid #b3b6b5; }
.body { display: flex; height: 87px; }
.caption { display: flex; gap: 4px; align-items: center; justify-content: center; height: 27px; padding-top: 4px; }
.sep { border-right: 1px solid #b3b6b5; }
.rows { display: flex; flex-direction: column; padding-left: 9px; }
.rows button { height: 29px; gap: 4px; justify-content: flex-start; }
.big { flex-direction: column; flex: 1; justify-content: flex-start; padding-top: 6px; gap: 13px; }
.big.sep { border-right: 1px solid #b3b6b5; flex: none; width: 74px; }
.big span svg { display: inline-block; vertical-align: 2px; }
.g-model { width: 251px; }
.g-model .rows { width: 166px; }
.g-play { width: 73px; }
.g-create { width: 273px; }
.g-design { width: 162px; padding: 0 3px; }
.g-timeline { width: 252px; }
.g-timeline .rows + .rows { padding-left: 11px; }
.g-close { width: 57px; }

/* Work area */
.work { flex: 1; display: flex; }
.side { width: 271px; border-right: 3px solid #d9dfdd; flex: none; }
.sidetabs { display: flex; height: 30px; background: #d9dfdd; }
.sidetabs button { width: 36px; }
.sidetabs .on { background: #f6f9f8; }
.treebar { display: flex; align-items: center; height: 36px; padding-left: 15px; }
.treebar button { height: 28px; }
.t-cube { margin-left: 5px; }
.grip { width: 2px; height: 14px; margin-left: 7px; border-left: 2px dotted #999; }
.t-a { margin-left: 27px; }
.t-b { margin-left: 13px; }
.t-c { width: 28px; margin-left: 11px; }
.rule { width: 1px; height: 28px; margin-left: 4px; background: #b3b6b5; }
.t-d { margin-left: 11px; }
.t-e { margin-left: 28px; }
.t-f { margin-left: 13px; }
.search { display: flex; align-items: center; padding-left: 14px; }
.field {
  display: flex;
  width: 176px;
  height: 31px;
  margin-left: 6px;
  padding-right: 7px;
  border: 1px solid #a9acac;
  background: #fff;
}
.field input { flex: 1; min-width: 0; border: 0; background: none; font: inherit; outline: 0; }
.s-caret { margin-left: 8px; color: #666; }
.s-plus { margin-left: 15px; }
.treewrap { display: flex; justify-content: space-between; margin-top: 9px; padding-right: 5px; }
.tree { font-family: "Noto Sans", sans-serif; font-size: 11px; line-height: 22px; }
.tree li { display: flex; align-items: center; height: 22px; padding-left: 16px; white-space: nowrap; }
.tree li > svg + svg { margin: 0 5px 0 3px; }
.tree .root { padding-left: 11px; gap: 5px; }
.faded { color: #b3b5a6; }
.picked { background: #b5e2fd; color: #1f3542; line-height: 22px; margin-left: -1px; padding: 0 0 0 1px; }
.vscroll { display: flex; flex-direction: column; width: 19px; background: #dfe1e1; color: #999; }
.vscroll button { height: 19px; border: 1px solid #cfd2d1; background: #f8f9f9; }
.vscroll .thumb { flex: 1; border: 1px solid #b9bcbb; background: #fafbfb; }
.vscroll .gap { height: 12px; }
.up { transform: scaleY(-1); }
.side .vscroll { height: 313px; }
.splitter { height: 7px; margin: 1px 5px 0 8px; background: #d9dfdd; }
.animbar { display: flex; align-items: center; height: 29px; padding-left: 15px; }
.animbar > svg { margin-left: 6px; }

/* Playback controls */
.stage { flex: 1; display: flex; flex-direction: column; min-width: 0; }
.player { display: flex; align-items: center; height: 53px; border-bottom: 2px solid #c6c9c8; }
.savecell { align-self: stretch; display: flex; width: 45px; padding: 8px 1px 11px 0; border-right: 1px solid #b3b6b5; }
.savecell button { flex: 1; border: 1px solid #b3b6b5; background: #fafbfb; }
.modes { display: flex; gap: 8px; padding-left: 12px; }
.modes button { width: 58px; height: 27px; border: 1px solid #a9acac; background: #fafbfb; }
.modes .pressed { width: 72px; background: #dfe1e1; }
.now { margin: 0 0 0 210px; flex: 1; }
.transport { display: flex; }
.transport button { width: 88px; height: 28px; padding-bottom: 4px; border: 1px solid #a9acac; background: #fafbfb; fill: #3a3a3a; }
.transport button + button { margin-left: -1px; }
.transport .soft { fill: #777; }
.speed { appearance: none; width: 150px; height: 24px; margin: 0 0 0 6px; background: linear-gradient(#999, #999) center / 100% 2px no-repeat; }
.speed::-webkit-slider-thumb { appearance: none; width: 13px; height: 24px; border: 2px solid #8b8d8d; border-radius: 2px; background: #eceded; }
.loop, .back { width: 44px; height: 32px; border: 1px solid #a9acac; }
.loop { margin-left: 30px; }
.back { margin: 0 32px 0 47px; background: #fafbfb; }

/* Timeline */
.tracks { display: flex; height: 95px; border: solid #cfd2d1; border-width: 0 0 1px 1px; background: #fbfcfc; }
.lane { position: relative; flex: 1; margin: 0 52px 0 42px; }
.tracks .vscroll .gap { height: 33px; }
.wire { position: absolute; left: 13.2%; right: 6.8%; top: 54px; border-top: 1px dotted #999; }
.cursor { position: absolute; left: 6.9%; top: 0; bottom: 1px; border-left: 1px dotted #000; }
.key { position: absolute; top: 51px; color: #a5a8a8; }
.key svg { margin-left: -5px; }
.key span { position: absolute; left: 0; top: 3px; line-height: 15px; }
.rulerbox { height: 46px; padding: 0 71px 0 43px; background: #fbfcfc; color: #111; }
.ruler { display: grid; grid-template-columns: repeat(30, 1fr); height: 31px; padding-top: 2px; }
.unit { position: relative; }
.unit svg { width: 100%; height: 16px; margin-top: 3px; overflow: visible; }
.unit span { position: absolute; left: 0; top: 1px; width: 20px; margin-left: -10px; text-align: center; }
.unit .last { left: 100%; }
.pointer { display: flex; justify-content: flex-end; gap: 7px; width: 7%; white-space: nowrap; }
.pointer svg { margin-right: -6px; }
.hscroll { display: flex; height: 19px; }
.hscroll button { width: 19px; border: 1px solid #cfd2d1; }
.hscroll .thumb { flex: 1; border: 1px solid #b3b6b5; background: #f8f9f9; }

/* Graphics area */
.viewport { flex: 1; display: flex; flex-direction: column; align-items: center; margin-top: 8px; padding: 7px 2px 0 0; background: #e7e8ea; }
.viewbar { display: flex; gap: 4px; padding: 4px; border: 1px solid #a5a8a8; background: #f8f9f9; }
.viewbar button { position: relative; width: 26px; height: 26px; }
.viewbar .corner { position: absolute; right: 0; bottom: 0; width: 4px; height: 4px; }
.model { width: 260px; height: 300px; margin: 134px 90px 0 0; }

/* Status bar */
.status { display: flex; align-items: center; height: 46px; padding: 8px 18px 0 6px; border-top: 1px solid #b3b6b5; }
.status > button { width: 26px; height: 28px; margin-right: 4px; }
.bar { width: 1px; height: 33px; background: #b3b6b5; }
.bar.short { height: 28px; margin-left: 5px; }
.pick { display: flex; align-items: center; margin-left: auto; padding-bottom: 5px; color: #555; }
.second { margin-left: 4px; }
.p-find { margin-left: 7px; }
.p-c1 { width: 25px; }
.p-box { margin-left: 8px; }
.p-c2 { width: 28px; }
.p-area { margin-left: 3px; }
.p-solid { width: 44px; height: 32px; margin-left: 7px; border: 1px solid #cfd2d1; background: #e9ebeb; }
.filter { position: relative; margin-left: 90px; }
.filter select { appearance: none; display: block; width: 169px; height: 30px; padding: 0 9px; border: 1px solid #a9acac; border-radius: 0; background: #f8fafa; color: #3d4142; font: inherit; }
.filter span { position: absolute; top: 0; right: 0; bottom: 0; display: flex; align-items: center; justify-content: center; width: 20px; border-left: 1px solid #a9acac; }

/* Taskbar */
.taskbar { display: flex; height: 30px; background: linear-gradient(90deg, #21363f 60%, #18243f 90%); }
.sys { width: 36px; }
.apps { display: flex; margin-left: 3px; }
.apps button { width: 37px; }
.apps .running { width: 36px; background: #485a62; border-bottom: 2px solid #6fb4e8; }
.tray { display: flex; align-items: center; margin-left: auto; gap: 9px; color: #fff; }
.tray time { margin-left: 3px; }
.notes { margin-left: 12px; }
.edge { width: 5px; height: 30px; margin-left: 10px; border-left: 1px solid #7d8797; }
```
FILE: script.js
```js
const lane = document.getElementById("lane");
const keys = [
  ["FRONT.1", 3.95], ["VIEW0001.1", 9.95], ["VIEW0002.1", 15.95],
  ["VIEW0003.1", 21.95], ["FRONT.2", 27.95]
];
for (const [name, time] of keys) {
  const el = document.createElement("div");
  el.className = "key";
  el.style.left = (time / 30 * 100) + "%";
  el.innerHTML = '<svg width="10" height="10" fill="#fbfcfc" stroke="#999"><path d="M1 .5h8L5 9z"/></svg><span>' + name + "</span>";
  lane.append(el);
}

const ruler = document.getElementById("ruler");
for (let n = 0; n < 30; n++) {
  const unit = document.createElement("div");
  unit.className = "unit";
  let ticks = "";
  for (let t = 1; t < 10; t++) {
    const x = t * 10 + "%";
    const y1 = t === 5 ? 1 : 3;
    const y2 = t === 5 ? 10 : 7;
    ticks += `<line x1="${x}" x2="${x}" y1="${y1}" y2="${y2}" stroke="#111" shape-rendering="crispEdges"/>`;
  }
  unit.innerHTML = `<svg>${ticks}</svg><span>${n}</span>` + (n === 29 ? '<span class="last">30</span>' : "");
  ruler.append(unit);
}
```
